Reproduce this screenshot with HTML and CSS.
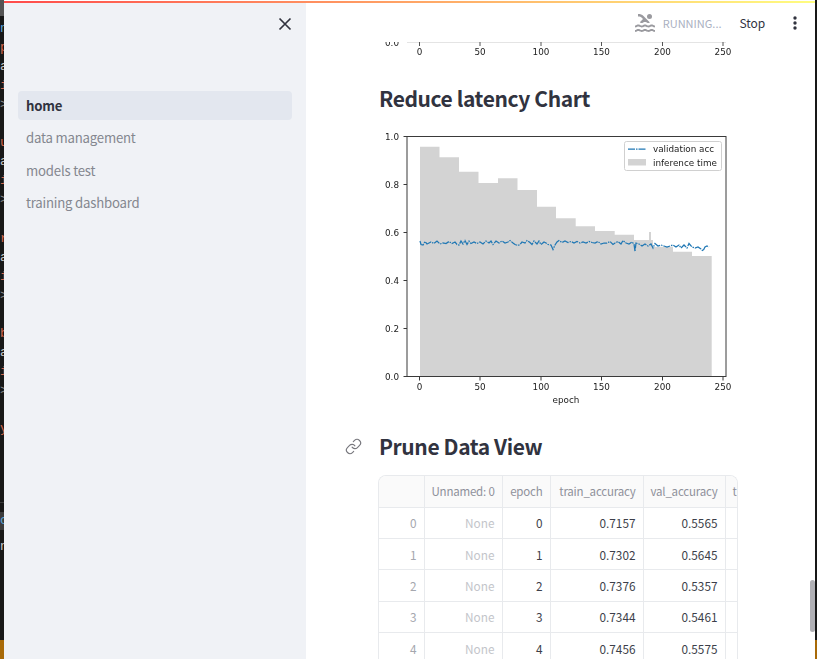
FILE: index.html
```html
<!DOCTYPE html>
<html lang="en">
<head>
    <meta charset="UTF-8">
    <meta name="viewport" content="width=device-width, initial-scale=1.0">
    <title>home</title>
    <link rel="stylesheet" href="styles.css">
</head>
<body>
    <!-- editor window showing behind the browser -->
    <div class="editor-left">
        <div class="editor-top"></div>
        <div class="code-lines">
            <div class="tok-blue">n</div>
            <div class="tok-red">p</div>
            <div>a</div>
            <div class="tok-red">i</div>
            <div class="tok-grey">&gt;</div>
            <div>&nbsp;</div>
            <div class="tok-red">u</div>
            <div>a</div>
            <div class="tok-red">i</div>
            <div class="tok-grey">&gt;</div>
            <div>&nbsp;</div>
            <div class="tok-red">r</div>
            <div>a</div>
            <div class="tok-red">i</div>
            <div class="tok-grey">&gt;</div>
            <div>&nbsp;</div>
            <div class="tok-red">b</div>
            <div>a</div>
            <div class="tok-red">i</div>
            <div class="tok-grey">&gt;</div>
            <div>&nbsp;</div>
            <div class="tok-red">y</div>
        </div>
        <div class="terminal">
            <div class="terminal-tab tok-blue">c</div>
            <div class="terminal-line">n</div>
        </div>
        <div class="status-orange"></div>
    </div>

    <div class="app">
        <div class="progress"></div>
        <div class="app-row">
            <aside class="sidebar">
                <div class="sidebar-top">
                    <svg class="close-icon" width="14" height="14" viewBox="0 0 14 14">
                        <path d="M1.5 1.5 L12.5 12.5 M12.5 1.5 L1.5 12.5" fill="none" stroke="#31333f" stroke-width="1.7"/>
                    </svg>
                </div>
                <ul class="nav">
                    <li class="nav-item active">home</li>
                    <li class="nav-item">data management</li>
                    <li class="nav-item">models test</li>
                    <li class="nav-item">training dashboard</li>
                </ul>
            </aside>

            <main class="main">
                <header class="topbar">
                    <svg class="swim-icon" width="24" height="24" viewBox="0 0 24 24" fill="#9a9a9f">
                        <path d="M22 21c-1.11 0-1.73-.37-2.18-.64-.37-.22-.6-.36-1.15-.36-.56 0-.78.13-1.15.36-.46.27-1.07.64-2.18.64s-1.73-.37-2.18-.64c-.37-.22-.6-.36-1.15-.36-.56 0-.78.13-1.15.36-.46.27-1.08.64-2.19.64-1.11 0-1.73-.37-2.18-.64-.37-.23-.6-.36-1.15-.36s-.78.13-1.15.36c-.46.27-1.08.64-2.19.64v-2c.56 0 .78-.13 1.15-.36.46-.27 1.08-.64 2.19-.64s1.73.37 2.18.64c.37.23.59.36 1.15.36.56 0 .78-.13 1.15-.36.46-.27 1.08-.64 2.19-.64 1.11 0 1.73.37 2.18.64.37.22.6.36 1.15.36s.78-.13 1.15-.36c.45-.27 1.07-.64 2.18-.64s1.73.37 2.18.64c.37.23.59.36 1.15.36v2zm0-4.5c-1.11 0-1.73-.37-2.18-.64-.37-.22-.6-.36-1.15-.36-.56 0-.78.13-1.15.36-.45.27-1.07.64-2.18.64s-1.73-.37-2.18-.64c-.37-.22-.6-.36-1.15-.36-.56 0-.78.13-1.15.36-.45.27-1.07.64-2.18.64s-1.73-.37-2.18-.64c-.37-.22-.6-.36-1.15-.36s-.78.13-1.15.36c-.47.27-1.09.64-2.2.64v-2c.56 0 .78-.13 1.15-.36.45-.27 1.07-.64 2.18-.64s1.73.37 2.18.64c.37.22.6.36 1.15.36.56 0 .78-.13 1.15-.36.45-.27 1.07-.64 2.18-.64s1.73.37 2.18.64c.37.22.6.36 1.15.36s.78-.13 1.15-.36c.45-.27 1.07-.64 2.18-.64s1.73.37 2.18.64c.37.22.6.36 1.15.36v2zM8.67 12c.56 0 .78-.13 1.15-.36.46-.27 1.08-.64 2.19-.64 1.11 0 1.73.37 2.18.64.37.22.6.36 1.15.36s.78-.13 1.15-.36c.12-.07.26-.15.41-.23L10.48 5C8.93 3.45 7.5 2.99 5 3v2.5c1.82-.01 2.89.39 4 1.5l1 1-3.25 3.25c.31.12.56.27.77.39.37.23.59.36 1.15.36z"/>
                        <circle cx="16.5" cy="5.5" r="2.5"/>
                    </svg>
                    <span class="running">RUNNING...</span>
                    <span class="stop">Stop</span>
                    <svg class="menu-icon" width="4" height="14" viewBox="0 0 4 14" fill="#31333f">
                        <circle cx="2" cy="2" r="1.7"/>
                        <circle cx="2" cy="7" r="1.7"/>
                        <circle cx="2" cy="12" r="1.7"/>
                    </svg>
                </header>

                <div class="content">
                    <!-- bottom of the chart above, scrolled under the header -->
                    <svg class="chart-tail" width="359" height="16" viewBox="379 42 359 16">
                        <path d="M407 42.5 H726" stroke="#e4e4e4" fill="none"/>
                        <path d="M419.5 42 V46 M480 42 V46 M541 42 V46 M601.5 42 V46 M662.5 42 V46 M723 42 V46" stroke="#555" fill="none"/>
                        <g class="tick-text" text-anchor="middle">
                            <text x="392" y="46">0.0</text>
                            <text x="419.5" y="55">0</text>
                            <text x="480" y="55">50</text>
                            <text x="541" y="55">100</text>
                            <text x="601.5" y="55">150</text>
                            <text x="662.5" y="55">200</text>
                            <text x="723" y="55">250</text>
                        </g>
                    </svg>

                    <h2 class="heading first">Reduce latency Chart</h2>

                    <svg class="chart" width="359" height="282" viewBox="379 128 359 282">
                        <path fill="#d3d3d3" d="M420 376.5 V146.7 H439.5 V157.3 H459 V171.7 H478.5 V183 H498 V178.3 H517.5 V190 H537 V206.7 H556 V218.3 H575.7 V226.3 H595 V231 H614.7 V234.7 H634 V240 H649 V232 H651 V240 H653 V246.7 H673 V251.7 H692 V256 H711.7 V376.5 Z"/>
                        <polyline fill="none" stroke="#1f77b4" stroke-width="1.25" stroke-dasharray="7 1 1.5 1" points="420,241 421,244.5 423,245 425,241.5 427,244 429,243 431,242 434,243.5 437,241 440,244 443,243 446,243.5 449,241.5 452,243.5 455,242 457,244.5 459,245 461,241 463,244 465,240.5 467,244.5 469,241 471,243.5 474,242 477,243.5 480,242 483,244 486,241 489,243 491,241 493,244.5 496,241 499,243 502,241 505,243 508,242 510,240.5 513,243 515,244.5 518,245.5 520,244.5 522,242 525,243 527,240.5 530,242.5 532,244.5 534,241 537,244 539,241 541,244.5 544,242 546,243 548,244.5 551,245 553,249.5 555,245 557,242 559,240.5 562,242.5 565,241 568,242.5 571,241.5 574,243 577,241.5 580,243 583,242 586,243 589,241.5 592,242.5 595,243 598,241.5 601,244 604,243 607,243 610,241.5 613,244.5 615,243 618,241.5 621,244 623,240.5 626,243 629,244 632,242 634,244 635,251.5 636,243 639,244 642,246 645,244 648,246 651,244 653,248 655,243.5 658,246 661,245 664,246 667,247 670,246 673,245 676,247 679,245 681,248 684,245 687,248 689,243.5 692,247 695,248 698,247 701,249 703,251 705,247 707,246 709,247"/>
                        <rect x="407" y="136.5" width="319" height="240" fill="none" stroke="#3a3a3a"/>
                        <path fill="none" stroke="#3a3a3a" d="M403.5 136.5 H407 M403.5 184.5 H407 M403.5 232.5 H407 M403.5 280.5 H407 M403.5 328.5 H407 M403.5 376.5 H407 M419.5 377 V380.5 M480 377 V380.5 M541 377 V380.5 M601.5 377 V380.5 M662.5 377 V380.5 M723 377 V380.5"/>
                        <g class="tick-text" text-anchor="end">
                            <text x="399" y="140">1.0</text>
                            <text x="399" y="188">0.8</text>
                            <text x="399" y="236">0.6</text>
                            <text x="399" y="284">0.4</text>
                            <text x="399" y="332">0.2</text>
                            <text x="399" y="380">0.0</text>
                        </g>
                        <g class="tick-text" text-anchor="middle">
                            <text x="419.5" y="390">0</text>
                            <text x="480" y="390">50</text>
                            <text x="541" y="390">100</text>
                            <text x="601.5" y="390">150</text>
                            <text x="662.5" y="390">200</text>
                            <text x="723" y="390">250</text>
                            <text x="566" y="403">epoch</text>
                        </g>
                        <rect x="624.5" y="141.5" width="97" height="29" rx="2" fill="#fff" fill-opacity="0.85" stroke="#d0d0d0"/>
                        <path d="M628 149 H646" stroke="#1f77b4" stroke-width="1.25" stroke-dasharray="7 1 1.5 1" fill="none"/>
                        <rect x="628" y="159" width="18" height="6.5" fill="#d3d3d3"/>
                        <g class="tick-text">
                            <text x="653" y="152">validation acc</text>
                            <text x="653" y="166">inference time</text>
                        </g>
                    </svg>

                    <h2 class="heading second">
                        <svg class="link-icon" width="17" height="17" viewBox="0 0 24 24" fill="none" stroke="#77777d" stroke-width="1.6" stroke-linecap="round" stroke-linejoin="round">
                            <path d="M10 13a5 5 0 0 0 7.54.54l3-3a5 5 0 0 0-7.07-7.07l-1.72 1.71"/>
                            <path d="M14 11a5 5 0 0 0-7.54-.54l-3 3a5 5 0 0 0 7.07 7.07l1.71-1.71"/>
                        </svg>
                        Prune Data View
                    </h2>

                    <div class="table-wrap">
                        <table class="data-table">
                            <colgroup>
                                <col class="col-index">
                                <col class="col-unnamed">
                                <col class="col-epoch">
                                <col class="col-train">
                                <col class="col-val">
                                <col class="col-next">
                            </colgroup>
                            <thead>
                                <tr>
                                    <th></th>
                                    <th>Unnamed: 0</th>
                                    <th>epoch</th>
                                    <th>train_accuracy</th>
                                    <th>val_accuracy</th>
                                    <th class="cell-left">t</th>
                                </tr>
                            </thead>
                            <tbody>
                                <tr><td class="row-index">0</td><td class="cell-none">None</td><td>0</td><td>0.7157</td><td>0.5565</td><td></td></tr>
                                <tr><td class="row-index">1</td><td class="cell-none">None</td><td>1</td><td>0.7302</td><td>0.5645</td><td></td></tr>
                                <tr><td class="row-index">2</td><td class="cell-none">None</td><td>2</td><td>0.7376</td><td>0.5357</td><td></td></tr>
                                <tr><td class="row-index">3</td><td class="cell-none">None</td><td>3</td><td>0.7344</td><td>0.5461</td><td></td></tr>
                                <tr><td class="row-index">4</td><td class="cell-none">None</td><td>4</td><td>0.7456</td><td>0.5575</td><td></td></tr>
                            </tbody>
                        </table>
                    </div>
                </div>
                <div class="scroll-thumb"></div>
            </main>
        </div>
    </div>

    <div class="editor-right">
        <div class="status-orange"></div>
    </div>
</body>
</html>
```

FILE: styles.css
```css
html, body {
    margin: 0;
    padding: 0;
    height: 100%;
}
body {
    display: flex;
    overflow: hidden;
    background-color: #181818;
    font-family: "Noto Sans CJK SC", "Noto Sans", sans-serif;
    color: #31333f;
}

/* editor behind the browser */
.editor-left, .editor-right {
    display: flex;
    flex-direction: column;
    overflow: hidden;
    flex-shrink: 0;
    background-color: #181818;
}
.editor-left {
    width: 4px;
}
.editor-right {
    width: 2px;
}
.editor-top {
    height: 16px;
    background-color: #555;
}
.code-lines {
    margin-top: 3px;
    font-family: "Liberation Mono", monospace;
    font-size: 13px;
    line-height: 19.05px;
    color: #c8c8c8;
    white-space: nowrap;
}
.tok-red {
    color: #d2694f;
}
.tok-blue {
    color: #5aa5d8;
}
.tok-grey {
    color: #8a8a8a;
}
.terminal {
    margin-top: 64px;
    border-top: 1px solid #3a3a3a;
    font-family: "Liberation Mono", monospace;
    font-size: 13px;
    line-height: 18px;
    color: #c8c8c8;
    padding-top: 9px;
}
.terminal-tab {
    background-color: #3c3c3c;
}
.terminal-line {
    margin-top: 8px;
}
.status-orange {
    margin-top: auto;
    height: 19px;
    flex-shrink: 0;
    background-color: #a86a08;
}

/* app shell */
.app {
    flex: 1;
    min-width: 0;
    display: flex;
    flex-direction: column;
    background-color: #fff;
}
.progress {
    height: 2px;
    margin-top: 1px;
    flex-shrink: 0;
    background-image: linear-gradient(90deg, #ff4b4b, #fffd80);
}
.app-row {
    flex: 1;
    display: flex;
    min-height: 0;
}

/* sidebar */
.sidebar {
    width: 302px;
    flex-shrink: 0;
    box-sizing: border-box;
    padding: 0 14px;
    background-color: #f0f2f6;
}
.sidebar-top {
    display: flex;
    justify-content: flex-end;
    padding: 14px 0 0;
    height: 74px;
    box-sizing: border-box;
}
.nav {
    list-style: none;
    margin: 14px 0 0;
    padding: 0;
}
.nav-item {
    height: 29px;
    margin-bottom: 3.3px;
    padding-left: 8px;
    border-radius: 4px;
    font-size: 13.2px;
    letter-spacing: -0.2px;
    line-height: 29px;
    color: #84878f;
}
.nav-item.active {
    background-color: #e3e7ef;
    color: #31333f;
    font-weight: 700;
}

/* main column */
.main {
    flex: 1;
    min-width: 0;
    position: relative;
    display: flex;
    flex-direction: column;
    overflow: hidden;
}
.topbar {
    height: 39px;
    flex-shrink: 0;
    display: flex;
    align-items: center;
    justify-content: flex-end;
    padding-right: 18px;
}
.swim-icon {
    margin-right: 6px;
}
.running {
    font-size: 11px;
    color: #a9afbf;
    margin-right: 18px;
}
.stop {
    font-size: 12px;
    letter-spacing: -0.1px;
    margin-right: 28px;
}
.content {
    flex: 1;
    min-height: 0;
    overflow: hidden;
    padding-left: 73px;
}
.chart-tail, .chart {
    display: block;
    filter: blur(0.35px);
}
.tick-text text {
    font-family: "DejaVu Sans", sans-serif;
    font-size: 8.8px;
    fill: #222;
}
.heading {
    margin: 0;
    font-size: 21px;
    letter-spacing: -0.4px;
    font-weight: 700;
    line-height: 36px;
    color: #31333f;
}
.heading.first {
    margin-top: 22px;
    margin-bottom: 12px;
}
.heading.second {
    display: flex;
    align-items: center;
    gap: 17px;
    margin-left: -34px;
    margin-top: 18px;
}
.scroll-thumb {
    position: absolute;
    right: 0;
    top: 577px;
    width: 5px;
    height: 52px;
    border-radius: 3px;
    background-color: #b0b0b5;
}

/* dataframe */
.table-wrap {
    width: 360px;
    margin-top: 11px;
    margin-left: -1px;
    overflow: hidden;
    box-sizing: border-box;
    border: 1px solid #e8eaed;
    border-bottom: none;
    border-radius: 8px 8px 0 0;
}
.data-table {
    table-layout: fixed;
    width: 417px;
    border-collapse: collapse;
    font-size: 11.8px;
}
.col-index { width: 45px; }
.col-unnamed { width: 78px; }
.col-epoch { width: 48px; }
.col-train { width: 93px; }
.col-val { width: 82px; }
.col-next { width: 71px; }
.data-table th, .data-table td {
    height: 31.3px;
    box-sizing: border-box;
    padding: 0 7px;
    text-align: right;
    border: 1px solid #e8eaed;
    white-space: nowrap;
}
.data-table tr > :first-child {
    border-left: none;
}
.data-table thead th {
    border-top: none;
    font-size: 11.5px;
    letter-spacing: -0.2px;
    font-weight: 400;
    color: #8f919a;
    background-color: #fafafa;
}
.data-table th.cell-left {
    text-align: left;
}
.data-table td {
    color: #3d3f4a;
}
.data-table td.row-index {
    color: #a5a7ae;
}
.data-table td.cell-none {
    color: #c3c5ca;
}
```
